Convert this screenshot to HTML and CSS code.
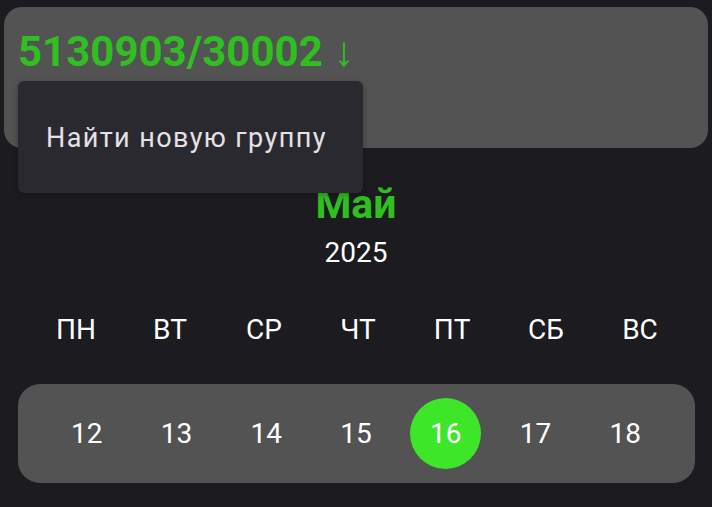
FILE: index.html
```html
<!DOCTYPE html>
<html lang="ru">
<head>
<meta charset="utf-8">
<link rel="stylesheet" href="styles.css">
</head>
<body>
<div class="page">
  <div class="group-card">
    <div class="group-title">5130903/30002 ↓</div>
  </div>
  <div class="menu">
    <div class="menu-item">Найти новую группу</div>
  </div>
  <div class="month">Май</div>
  <div class="year">2025</div>
  <div class="weekdays">
    <div class="wd">ПН</div>
    <div class="wd">ВТ</div>
    <div class="wd">СР</div>
    <div class="wd">ЧТ</div>
    <div class="wd">ПТ</div>
    <div class="wd">СБ</div>
    <div class="wd">ВС</div>
  </div>
  <div class="days-card">
    <div class="day"><span class="num">12</span></div>
    <div class="day"><span class="num">13</span></div>
    <div class="day"><span class="num">14</span></div>
    <div class="day"><span class="num">15</span></div>
    <div class="day"><span class="num selected">16</span></div>
    <div class="day"><span class="num">17</span></div>
    <div class="day"><span class="num">18</span></div>
  </div>
</div>
</body>
</html>
```
FILE: styles.css
```css
html, body {
  margin: 0;
  padding: 0;
  background: #1c1b1f;
}
body {
  font-family: Roboto, "Noto Sans", sans-serif;
  color: #ffffff;
  width: 712px;
  height: 507px;
  overflow: hidden;
}
.page {
  position: relative;
  padding-top: 7px;
}
.group-card {
  margin: 0 4px;
  height: 141px;
  box-sizing: border-box;
  background: #535353;
  border-radius: 18px;
  padding: 20px 14px;
}
.group-title {
  color: #2fbf1f;
  font-weight: 700;
  font-size: 42px;
  line-height: 49px;
}
.menu {
  position: absolute;
  left: 18px;
  top: 81px;
  width: 345px;
  height: 112px;
  background: #2b2930;
  border-radius: 6px;
  box-shadow: 0 2px 6px rgba(0,0,0,0.3);
  display: flex;
  align-items: center;
  box-sizing: border-box;
  padding-left: 28px;
}
.menu-item {
  color: #e6e1e5;
  font-size: 27px;
  line-height: 32px;
  letter-spacing: 1.4px;
  margin-top: 2px;
}
.month {
  margin-top: 32px;
  text-align: center;
  color: #2fbf1f;
  font-weight: 700;
  font-size: 41px;
  line-height: 48px;
}
.year {
  margin-top: 8px;
  text-align: center;
  font-size: 28px;
  line-height: 33px;
}
.weekdays {
  margin-top: 44px;
  display: grid;
  grid-template-columns: repeat(7, 94px);
  padding-left: 29px;
  font-size: 28px;
  line-height: 33px;
}
.wd {
  text-align: center;
}
.days-card {
  margin: 38px 17px 0 18px;
  height: 99px;
  box-sizing: border-box;
  background: #535353;
  border-radius: 22px;
  display: grid;
  grid-template-columns: repeat(7, 1fr);
  padding: 0 25px 0 24px;
  align-items: center;
}
.day {
  display: flex;
  justify-content: center;
}
.num {
  width: 71px;
  height: 71px;
  border-radius: 50%;
  display: flex;
  align-items: center;
  justify-content: center;
  font-size: 28px;
  line-height: 33px;
}
.num.selected {
  background: #3ee62a;
}
```
